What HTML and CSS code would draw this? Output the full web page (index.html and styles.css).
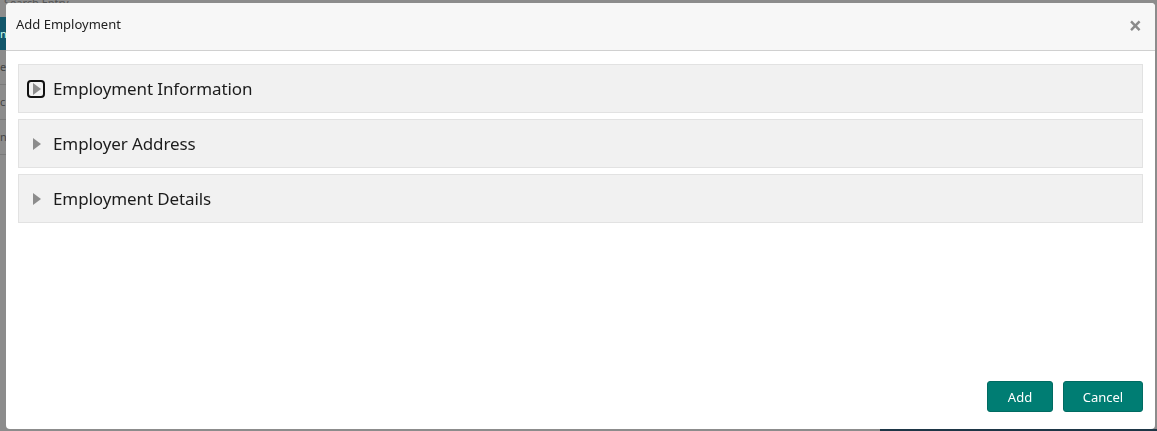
FILE: index.html
```html
<!DOCTYPE html>
<html lang="en">
<head>
    <meta charset="UTF-8">
    <meta name="viewport" content="width=device-width, initial-scale=1.0">
    <title>Add Employment</title>
    <link rel="stylesheet" href="styles.css">
</head>
<body>
    <div class="page">
        <div class="page-top">Search Entry</div>
        <div class="page-side">
            <div class="side-tab">n</div>
            <div class="side-row">er</div>
            <div class="side-row">c</div>
            <div class="side-row">n</div>
        </div>
        <div class="page-bottom"></div>
    </div>

    <div class="overlay">
        <div class="modal">
            <div class="modal-header">
                <h2>Add Employment</h2>
                <span class="close">&times;</span>
            </div>
            <div class="modal-body">
                <div class="panel">
                    <span class="toggle focused"><span class="arrow"></span></span>
                    <span class="panel-title">Employment Information</span>
                </div>
                <div class="panel">
                    <span class="toggle"><span class="arrow"></span></span>
                    <span class="panel-title">Employer Address</span>
                </div>
                <div class="panel">
                    <span class="toggle"><span class="arrow"></span></span>
                    <span class="panel-title">Employment Details</span>
                </div>
            </div>
            <div class="modal-footer">
                <button type="button" class="btn btn-add">Add</button>
                <button type="button" class="btn btn-cancel">Cancel</button>
            </div>
        </div>
    </div>
</body>
</html>
```

FILE: styles.css
```css
body {
    margin: 0;
    padding: 0;
    font-family: "Noto Sans", "Open Sans", sans-serif;
    background-color: #8c8c8c;
    width: 1157px;
    height: 431px;
    overflow: hidden;
}
.page {
    height: 431px;
    display: flex;
    flex-direction: column;
}
.page-top {
    height: 3px;
    font-size: 11px;
    line-height: 6px;
    color: #555;
    padding-left: 4px;
    overflow: hidden;
}
.page-side {
    flex: 1;
    width: 6px;
    overflow: hidden;
    font-size: 11px;
    color: #444;
}
.side-tab {
    height: 33px;
    margin-top: 14px;
    background-color: #12566a;
    color: #cfe;
    line-height: 33px;
}
.side-row {
    height: 34px;
    line-height: 34px;
    border-bottom: 1px solid #7a7a7a;
}
.page-bottom {
    height: 2px;
    margin-left: 880px;
    background-color: #1e3646;
}
.overlay {
    position: fixed;
    top: 0;
    left: 0;
    width: 100%;
    height: 100%;
    padding: 3px 2px 2px 6px;
    box-sizing: border-box;
}
.modal {
    height: 100%;
    background-color: #fff;
    border-radius: 4px;
    display: flex;
    flex-direction: column;
    overflow: hidden;
}
.modal-header {
    background-color: #f7f7f7;
    border-bottom: 1px solid #d0d0d0;
    height: 47px;
    display: flex;
    align-items: center;
    justify-content: space-between;
    padding: 0 13px 0 10px;
}
.modal-header h2 {
    margin: 0 0 6px 0;
    font-size: 13px;
    font-weight: normal;
    color: #222;
}
.close {
    color: #8a8a8a;
    font-size: 23px;
    font-weight: bold;
    line-height: 1;
    margin-bottom: 3px;
    cursor: pointer;
}
.modal-body {
    flex: 1;
    padding: 13px 12px 0 12px;
    display: flex;
    flex-direction: column;
    gap: 6px;
}
.panel {
    height: 47px;
    background-color: #f1f1f1;
    border: 1px solid #e2e2e2;
    display: flex;
    align-items: center;
    padding-left: 8px;
}
.toggle {
    width: 18px;
    height: 18px;
    box-sizing: border-box;
    display: flex;
    align-items: center;
    justify-content: center;
    border: 2px solid transparent;
    border-radius: 4px;
    margin-right: 8px;
}
.toggle.focused {
    border-color: #111;
}
.arrow {
    width: 0;
    height: 0;
    border-top: 6px solid transparent;
    border-bottom: 6px solid transparent;
    border-left: 8px solid #8c8c8c;
    margin-left: 2px;
}
.panel-title {
    font-size: 17px;
    letter-spacing: -0.1px;
    color: #1c1c1c;
}
.modal-footer {
    display: flex;
    justify-content: flex-end;
    gap: 10px;
    padding: 0 12px 17px 0;
}
.btn {
    background-color: #007d73;
    color: #fff;
    border: 1px solid #006b62;
    border-radius: 3px;
    height: 31px;
    font-family: "Noto Sans", "Open Sans", sans-serif;
    font-size: 13px;
    cursor: pointer;
}
.btn-add {
    width: 66px;
}
.btn-cancel {
    width: 80px;
}
```
